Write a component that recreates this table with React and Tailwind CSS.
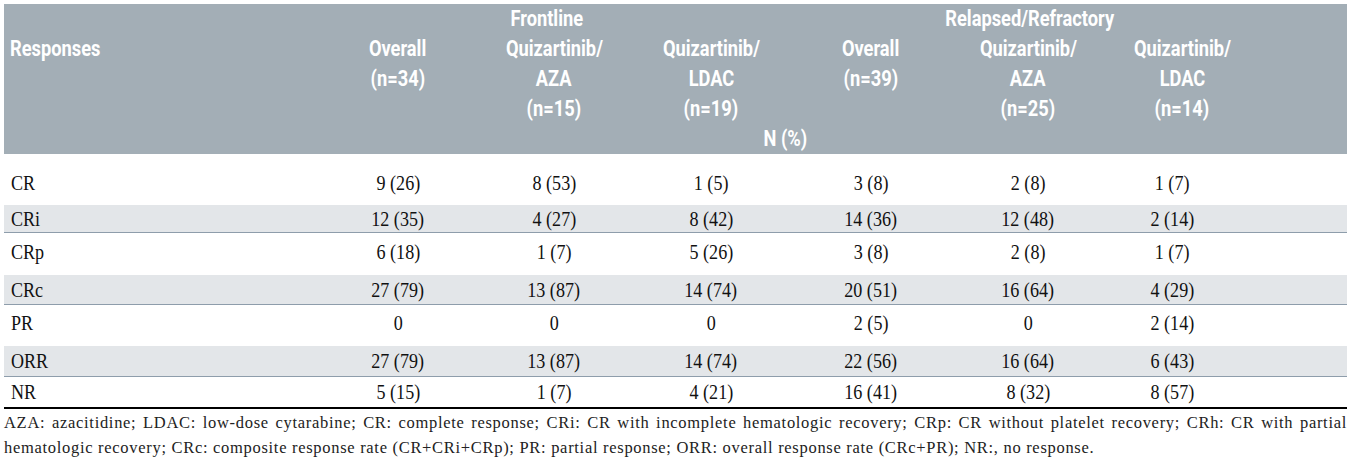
const cols = 'grid grid-cols-[316px_156px_156px_158px_162px_152px_136px_1fr]';

const rows = [
  { label: 'CR', vals: ['9 (26)', '8 (53)', '1 (5)', '3 (8)', '2 (8)', '1 (7)'], cls: 'h-[51px] pt-[7px]' },
  { label: 'CRi', vals: ['12 (35)', '4 (27)', '8 (42)', '14 (36)', '12 (48)', '2 (14)'], cls: 'h-[28px] bg-[#e3e6e9] border-b border-[#8e9dab]' },
  { label: 'CRp', vals: ['6 (18)', '1 (7)', '5 (26)', '3 (8)', '2 (8)', '1 (7)'], cls: 'h-[42px] pb-[4px]' },
  { label: 'CRc', vals: ['27 (79)', '13 (87)', '14 (74)', '20 (51)', '16 (64)', '4 (29)'], cls: 'h-[30px] bg-[#e3e6e9] border-b border-[#8e9dab]' },
  { label: 'PR', vals: ['0', '0', '0', '2 (5)', '0', '2 (14)'], cls: 'h-[41px] pb-[5px]' },
  { label: 'ORR', vals: ['27 (79)', '13 (87)', '14 (74)', '22 (56)', '16 (64)', '6 (43)'], cls: 'h-[31px] bg-[#e3e6e9] border-b border-[#8e9dab]' },
  { label: 'NR', vals: ['5 (15)', '1 (7)', '4 (21)', '16 (41)', '8 (32)', '8 (57)'], cls: 'h-[32px] border-b-2 border-black' },
];

// header lines per column, '' keeps an empty line
const head = [
  { lines: ['', 'Overall', '(n=34)'] },
  { lines: ['Frontline', 'Quizartinib/', 'AZA', '(n=15)'], first: 'mr-[14px]' },
  { lines: ['', 'Quizartinib/', 'LDAC', '(n=19)'] },
  { lines: ['', 'Overall', '(n=39)'] },
  { lines: ['Relapsed/Refractory', 'Quizartinib/', 'AZA', '(n=25)'], first: 'ml-[4px]' },
  { lines: ['', 'Quizartinib/', 'LDAC', '(n=14)'], cell: 'pl-[20px]' },
];

const headFont = "font-['Roboto',sans-serif] font-bold";
const bodyFont = "font-['Liberation_Serif',serif]";

// the original uses condensed faces; squeeze the installed ones to match
function H({ children, left }) {
  return <span className={`inline-block scale-x-[0.83] ${left ? 'origin-left' : ''}`}>{children}</span>;
}
function B({ children, left }) {
  return <span className={`inline-block scale-x-[0.86] ${left ? 'origin-left' : ''}`}>{children}</span>;
}

export default function App() {
  return (
    <div className="w-[1351px] h-[471px] bg-white pt-[6px] px-[4px] text-[#111]">
      <div className={`h-[150px] bg-[#a3aeb6] text-white text-[22px] leading-[30px] ${headFont}`}>
        <div className={`${cols} -mt-[2px]`}>
          <div className="pl-[6px] pt-[30px]"><H left>Responses</H></div>
          {head.map((c, i) => (
            <div key={i} className={`flex flex-col items-center ${c.cell || ''}`}>
              {c.lines.map((t, j) => (
                <div key={j} className={`h-[30px] whitespace-nowrap ${j === 0 && c.first ? c.first : ''}`}><H>{t}</H></div>
              ))}
            </div>
          ))}
          <div className="col-start-4 col-span-2 flex justify-center pr-[14px]"><H>N (%)</H></div>
        </div>
      </div>

      <div className={`${bodyFont} text-[21px] leading-[26px]`}>
        {rows.map((r) => (
          <div key={r.label} className={`${cols} items-center ${r.cls}`}>
            <div className="pl-[7px]"><B left>{r.label}</B></div>
            {r.vals.map((v, i) => (
              <div key={i} className="flex justify-center whitespace-nowrap"><B>{v}</B></div>
            ))}
          </div>
        ))}
      </div>

      <div className={`${bodyFont} mt-[1px] text-[16.5px] tracking-[0.7px] leading-[25px] text-[#222]`}>
        <p className="text-justify [text-align-last:justify]">
          AZA: azacitidine; LDAC: low-dose cytarabine; CR: complete response; CRi: CR with incomplete hematologic recovery; CRp: CR without platelet recovery; CRh: CR with partial
        </p>
        <p>
          hematologic recovery; CRc: composite response rate (CR+CRi+CRp); PR: partial response; ORR: overall response rate (CRc+PR); NR:, no response.
        </p>
      </div>
    </div>
  );
}
